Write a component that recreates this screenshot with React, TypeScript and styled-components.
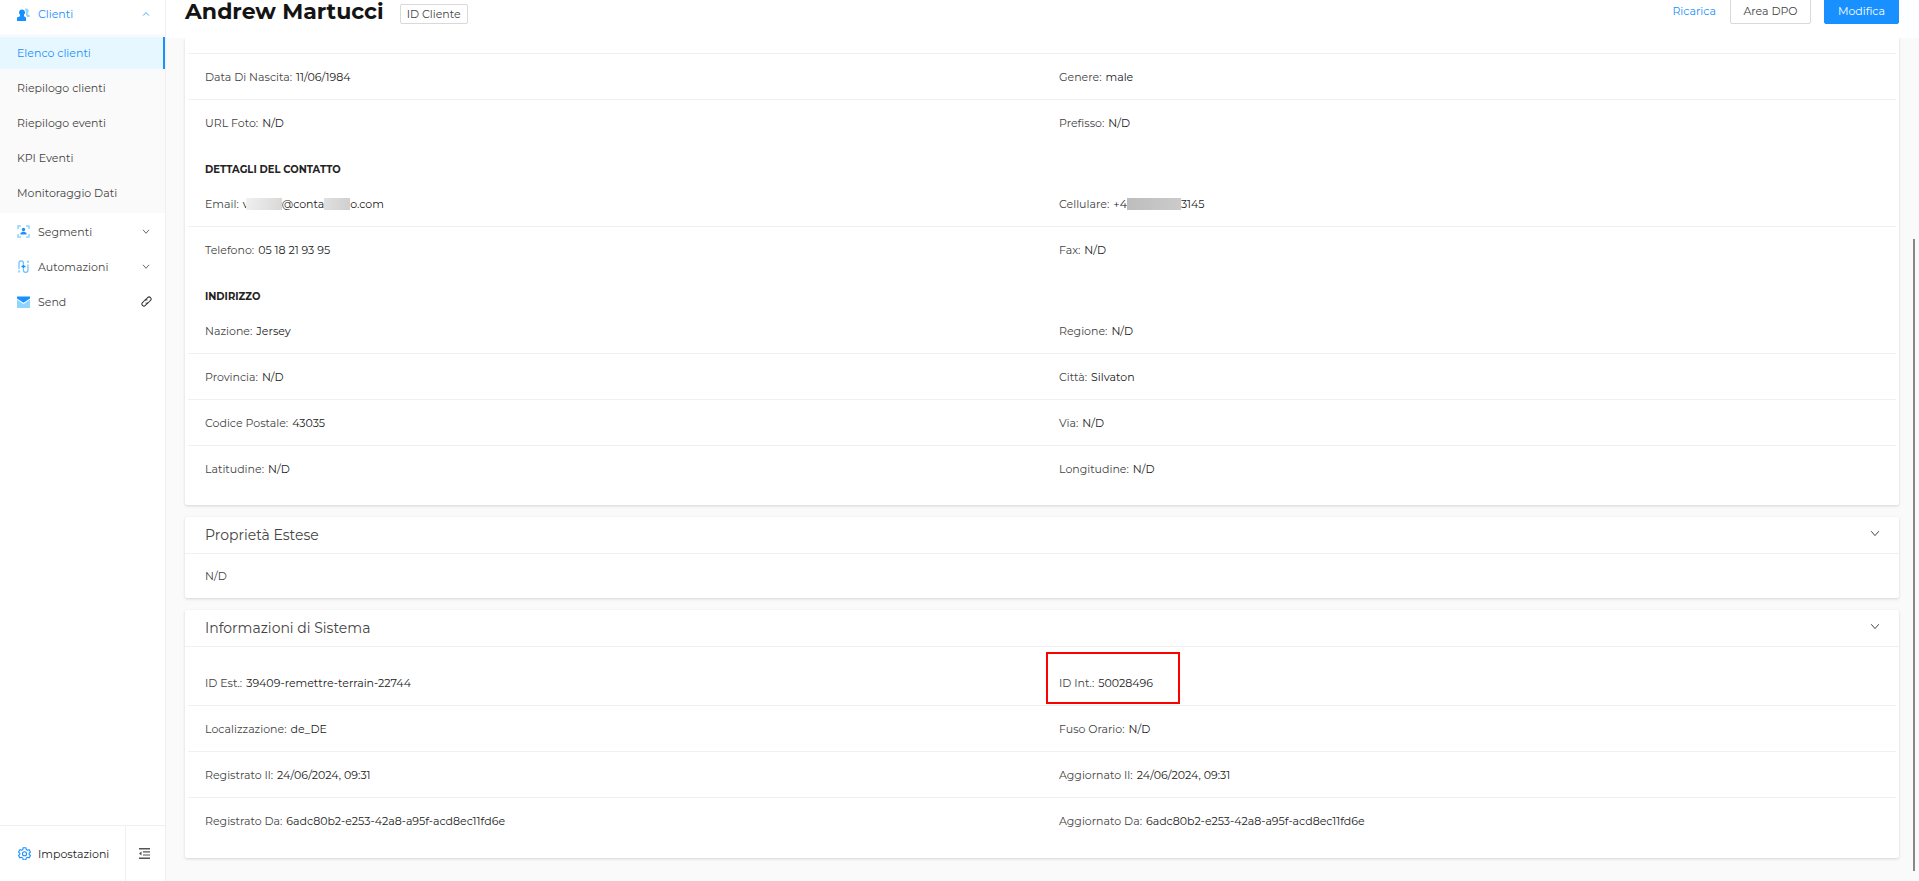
import React from 'react';
import styled, { createGlobalStyle } from 'styled-components';

const Global = createGlobalStyle`
  *, *::before, *::after { box-sizing: border-box; }
  body { margin: 0; }
  body, button { font-family: Montserrat, Inter, "Open Sans", sans-serif; font-size: 11px; line-height: 18px; color: #444; }
  h1, h2, h3, ul, dl, dd, dt { margin: 0; padding: 0; font-weight: 400; }
  ul { list-style: none; }
  button { margin: 0; padding: 0; border: 0; background: none; cursor: pointer; }
  a { color: inherit; text-decoration: none; }
  svg { display: block; flex: none; }
`;

const Shell = styled.div`
  position: relative;
  display: grid;
  grid-template-columns: 166px minmax(0, 1fr);
  height: 100vh;
  overflow: hidden;
  background: #fafafa;
`;

const Sidebar = styled.aside`
  display: flex;
  flex-direction: column;
  background: #fff;
  border-right: 1px solid #f0f0f0;
`;

const Nav = styled.nav`
  flex: 1;
`;

const GroupItem = styled.a<{ $active?: boolean }>`
  display: flex;
  align-items: center;
  height: ${(p) => (p.$active ? 28 : 35)}px;
  padding: 0 12px 0 17px;
  gap: 8px;
  color: ${(p) => (p.$active ? '#1890ff' : '#444')};
`;

const OpenGroup = styled.li`
  height: 34px;
`;

const GroupLabel = styled.span`
  flex: 1;
`;

const Tail = styled.span`
  display: flex;
  justify-content: center;
  width: 14px;
`;

const SubMenu = styled.ul`
  padding: 3px 0 1px;
  background: #fafafa;
  margin-bottom: 1px;
`;

const SubItem = styled.a<{ $selected?: boolean }>`
  display: flex;
  align-items: center;
  height: 32px;
  margin-bottom: 3px;
  padding-left: 17px;
  color: ${(p) => (p.$selected ? '#1890ff' : '#444')};
  background: ${(p) => (p.$selected ? '#e6f7ff' : 'transparent')};
  border-right: 2px solid ${(p) => (p.$selected ? '#1890ff' : 'transparent')};
`;

const SideFooter = styled.div`
  display: flex;
  height: 56px;
  border-top: 1px solid #f0f0f0;
`;

const SettingsButton = styled.button`
  flex: 1;
  display: flex;
  align-items: center;
  gap: 7px;
  padding-left: 18px;
  color: #222;
`;

const CollapseButton = styled.button`
  display: flex;
  align-items: center;
  justify-content: center;
  width: 40px;
  padding-right: 2px;
  border-left: 1px solid #f0f0f0;
`;

const Main = styled.main`
  display: flex;
  flex-direction: column;
  min-width: 0;
`;

const Header = styled.header`
  display: flex;
  align-items: flex-end;
  gap: 16px;
  height: 38px;
  padding: 0 20px 14px 19px;
  background: #fff;
`;

const Title = styled.h1`
  font-size: 22px;
  line-height: 24px;
  font-weight: 700;
  color: #141414;
`;

const IdTag = styled.button`
  height: 20px;
  padding: 0 6px;
  border: 1px solid #d9d9d9;
  border-radius: 2px;
`;

const Actions = styled.div`
  display: flex;
  align-items: center;
  gap: 13px;
  margin-left: auto;
`;

const ActionButton = styled.button<{ $kind: 'link' | 'default' | 'primary' }>`
  height: 26px;
  min-width: ${(p) => (p.$kind === 'default' ? 81 : p.$kind === 'primary' ? 75 : 44)}px;
  border: 1px solid ${(p) => (p.$kind === 'link' ? 'transparent' : p.$kind === 'primary' ? '#1890ff' : '#d9d9d9')};
  border-radius: 2px;
  color: ${(p) => (p.$kind === 'link' ? '#1890ff' : p.$kind === 'primary' ? '#fff' : '#444')};
  background: ${(p) => (p.$kind === 'primary' ? '#1890ff' : 'transparent')};
`;

const Content = styled.div`
  display: flex;
  flex-direction: column;
  gap: 12px;
  padding: 0 20px 0 19px;
`;

const Card = styled.section<{ $cut?: boolean }>`
  background: #fff;
  border-radius: ${(p) => (p.$cut ? '0 0 2px 2px' : '2px')};
  box-shadow: 0 1px 3px rgba(0, 20, 20, 0.16);
  padding-bottom: ${(p) => (p.$cut ? 13 : 0)}px;
  clip-path: ${(p) => (p.$cut ? 'inset(0 -6px -6px -6px)' : 'none')};
`;

const CardHead = styled.button`
  display: flex;
  align-items: center;
  justify-content: space-between;
  width: 100%;
  height: 37px;
  padding: 0 19px 0 20px;
  border-bottom: 1px solid #f0f0f0;

  svg {
    margin-bottom: 3px;
  }
`;

const CardTitle = styled.h2`
  font-size: 14px;
  line-height: 20px;
  color: #444;
`;

const CardNote = styled.p`
  margin: 0;
  padding: 13px 20px;
`;

const CardBody = styled.div`
  padding: 13px 0 14px;
`;

const SectionTitle = styled.h3`
  padding: 15px 20px 2px;
  font-size: 10px;
  line-height: 18px;
  font-weight: 700;
  color: #222;
`;

const Rows = styled.dl`
  padding: 0 3px;
`;

const Row = styled.div<{ $last?: boolean }>`
  display: grid;
  grid-template-columns: 1fr 1fr;
  height: 46px;
  align-items: center;
  border-bottom: 1px solid ${(p) => (p.$last ? 'transparent' : '#f0f0f0')};
`;

const Field = styled.div`
  position: relative;
  display: flex;
  gap: 4px;
  padding-left: 17px;
`;

const Term = styled.dt`
  color: #444;
`;

const Value = styled.dd`
  display: flex;
  align-items: center;
  color: #222;
`;

const Mask = styled.span<{ $w: number; $from: string; $to: string; $cover: number }>`
  width: ${(p) => p.$w}px;
  height: 12px;
  margin-left: -${(p) => p.$cover}px;
  background: linear-gradient(100deg, ${(p) => p.$from}, ${(p) => p.$to});
`;

const Highlight = styled.span`
  position: absolute;
  left: 4px;
  top: -22px;
  width: 134px;
  height: 52px;
  border: 2px solid #f00;
`;

const TopGap = styled.div`
  height: 16px;
  background: linear-gradient(#f0f0f0, #f0f0f0) bottom / calc(100% - 6px) 1px no-repeat;
`;

const Thumb = styled.div`
  position: absolute;
  right: 4px;
  top: 239px;
  bottom: 10px;
  width: 2px;
  background: #888;
`;

const Chevron = ({ up, size = 8 }: { up?: boolean; size?: number }) => (
  <svg width={size} height={size} viewBox="0 0 8 8" fill="none" stroke="currentColor" strokeWidth="0.8">
    <path d={up ? 'M1 5.6 4 2.6 7 5.6' : 'M1 1.800 4 5.300 7 1.800'} />
  </svg>
);

const ClientsIcon = () => (
  <svg width="13" height="13" viewBox="0 0 13 13">
    <path fill="#91d5ff" d="M8 .5h1.500a2.400 2.400 0 0 1 1.300 4.300v1.400l2 1V9H10L9 7V4.500z" />
    <path fill="#1890ff" d="M5 1.500a3 3 0 0 1 2 5.300v1.400l2 1.300V13H0V9.500l3-1.300V6.800a3 3 0 0 1 2-5.300z" />
  </svg>
);

const SegmentsIcon = () => (
  <svg width="13" height="13" viewBox="0 0 13 13">
    <path fill="none" stroke="#91d5ff" strokeWidth="1.500" d="M1 4V1h3M9 1h3v3M12 9v3H9M4 12H1V9" />
    <circle cx="6.500" cy="4.500" r="1.700" fill="#1890ff" />
    <path fill="#1890ff" d="M3.500 9.500V8l2-1.200h2l2 1.200v1.500z" />
  </svg>
);

const AutomationsIcon = () => (
  <svg width="13" height="13" viewBox="0 0 13 13" fill="none">
    <path stroke="#69c0ff" strokeWidth="1.200" d="M2 9V3a2.200 2.200 0 0 1 4.400 0v1M6.400 9v1a2.300 2.300 0 0 0 4.600 0V4.500" />
    <path stroke="#1890ff" strokeWidth="1.400" d="M6.400 4.500v4M4.500 6.500h4" />
    <path fill="#91d5ff" d="M1 10.500h2v2H1zM10 .8h2v2h-2z" />
  </svg>
);

const SendIcon = () => (
  <svg width="13" height="12" viewBox="0 0 13 12">
    <path fill="#91d5ff" d="M0 3.500 6.500 8 13 3.500V12H0z" />
    <path fill="#1890ff" d="M0 .5h13v2L6.500 6.800 0 2.500z" />
  </svg>
);

const LinkIcon = () => (
  <svg width="11" height="11" viewBox="0 0 24 24" fill="none" stroke="#333" strokeWidth="2.200">
    <path d="m8.500 9.500 6-6a4.300 4.300 0 0 1 6.200 6.200l-5 5a4 4 0 0 1-5.700 0" />
    <path d="m15.500 14.500-6 6a4.300 4.300 0 0 1-6.200-6.200l5-5a4 4 0 0 1 5.700 0" />
  </svg>
);

const GearIcon = () => (
  <svg width="13" height="13" viewBox="0 0 24 24" fill="none" stroke="#1890ff" strokeWidth="2">
    <path d="M9.500 1.500h5l.7 3.200 2.200 1.300 3.100-1 2.500 4.300-2.400 2.200v2l2.400 2.200-2.500 4.300-3.100-1-2.200 1.300-.7 3.200h-5l-.7-3.200L6.600 19l-3.100 1L1 15.700l2.400-2.200v-2L1 9.300 3.500 5l3.100 1 2.200-1.300z" />
    <circle cx="12" cy="12.500" r="3.800" />
  </svg>
);

const FoldIcon = () => (
  <svg width="11" height="11" viewBox="0 0 11 11" fill="#555">
    <path d="M0 0h11v1.400H0zM4 3.200h7v1.200H4zM4 6.400h7v1.200H4zM0 9.500h11V11H0zM0 5.400l2.500-2v4z" />
  </svg>
);

type Pair = [string, React.ReactNode, boolean?];

const FieldView = ({ pair: [label, value, marked] }: { pair: Pair }) => (
  <Field>
    <Term>{label}:</Term>
    <Value>{value}</Value>
    {marked && <Highlight />}
  </Field>
);

const RowList = ({ rows }: { rows: [Pair, Pair][] }) => (
  <Rows>
    {rows.map(([a, b], i) => (
      <Row key={a[0]} $last={i === rows.length - 1}>
        <FieldView pair={a} />
        <FieldView pair={b} />
      </Row>
    ))}
  </Rows>
);

const personal: [Pair, Pair][] = [
  [['Data Di Nascita', '11/06/1984'], ['Genere', 'male']],
  [['URL Foto', 'N/D'], ['Prefisso', 'N/D']],
];

const contact: [Pair, Pair][] = [
  [
    ['Email', <>v<Mask $w={36} $cover={3} $from="#f0f0f0" $to="#d8d8d8" />@conta<Mask $w={26} $cover={0} $from="#e0e0e0" $to="#cfcfcf" />o.com</>],
    ['Cellulare', <>+4<Mask $w={54} $cover={0} $from="#bdbdbd" $to="#cbcbcb" />3145</>],
  ],
  [['Telefono', '05 18 21 93 95'], ['Fax', 'N/D']],
];

const address: [Pair, Pair][] = [
  [['Nazione', 'Jersey'], ['Regione', 'N/D']],
  [['Provincia', 'N/D'], ['Città', 'Silvaton']],
  [['Codice Postale', '43035'], ['Via', 'N/D']],
  [['Latitudine', 'N/D'], ['Longitudine', 'N/D']],
];

const system: [Pair, Pair][] = [
  [['ID Est.', '39409-remettre-terrain-22744'], ['ID Int.', '50028496', true]],
  [['Localizzazione', 'de_DE'], ['Fuso Orario', 'N/D']],
  [['Registrato Il', '24/06/2024, 09:31'], ['Aggiornato Il', '24/06/2024, 09:31']],
  [['Registrato Da', '6adc80b2-e253-42a8-a95f-acd8ec11fd6e'], ['Aggiornato Da', '6adc80b2-e253-42a8-a95f-acd8ec11fd6e']],
];

const subItems = ['Elenco clienti', 'Riepilogo clienti', 'Riepilogo eventi', 'KPI Eventi', 'Monitoraggio Dati'];

export default function App() {
  return (
    <>
      <Global />
      <Shell>
        <Sidebar>
          <Nav>
            <ul>
              <OpenGroup>
                <GroupItem href="#" $active>
                  <ClientsIcon />
                  <GroupLabel>Clienti</GroupLabel>
                  <Tail><Chevron up /></Tail>
                </GroupItem>
              </OpenGroup>
              <li>
                <SubMenu>
                  {subItems.map((t, i) => (
                    <li key={t}><SubItem href="#" $selected={i === 0}>{t}</SubItem></li>
                  ))}
                </SubMenu>
              </li>
              <li>
                <GroupItem href="#">
                  <SegmentsIcon />
                  <GroupLabel>Segmenti</GroupLabel>
                  <Tail><Chevron /></Tail>
                </GroupItem>
              </li>
              <li>
                <GroupItem href="#">
                  <AutomationsIcon />
                  <GroupLabel>Automazioni</GroupLabel>
                  <Tail><Chevron /></Tail>
                </GroupItem>
              </li>
              <li>
                <GroupItem href="#">
                  <SendIcon />
                  <GroupLabel>Send</GroupLabel>
                  <Tail><LinkIcon /></Tail>
                </GroupItem>
              </li>
            </ul>
          </Nav>
          <SideFooter>
            <SettingsButton><GearIcon />Impostazioni</SettingsButton>
            <CollapseButton aria-label="Comprimi menu"><FoldIcon /></CollapseButton>
          </SideFooter>
        </Sidebar>
        <Main>
          <Header>
            <Title>Andrew Martucci</Title>
            <IdTag>ID Cliente</IdTag>
            <Actions>
              <ActionButton $kind="link">Ricarica</ActionButton>
              <ActionButton $kind="default">Area DPO</ActionButton>
              <ActionButton $kind="primary">Modifica</ActionButton>
            </Actions>
          </Header>
          <Content>
            <Card $cut>
              <TopGap />
              <RowList rows={personal} />
              <SectionTitle>DETTAGLI DEL CONTATTO</SectionTitle>
              <RowList rows={contact} />
              <SectionTitle>INDIRIZZO</SectionTitle>
              <RowList rows={address} />
            </Card>
            <Card>
              <CardHead><CardTitle>Proprietà Estese</CardTitle><Chevron size={10} /></CardHead>
              <CardNote>N/D</CardNote>
            </Card>
            <Card>
              <CardHead><CardTitle>Informazioni di Sistema</CardTitle><Chevron size={10} /></CardHead>
              <CardBody>
                <RowList rows={system} />
              </CardBody>
            </Card>
          </Content>
        </Main>
        <Thumb />
      </Shell>
    </>
  );
}
